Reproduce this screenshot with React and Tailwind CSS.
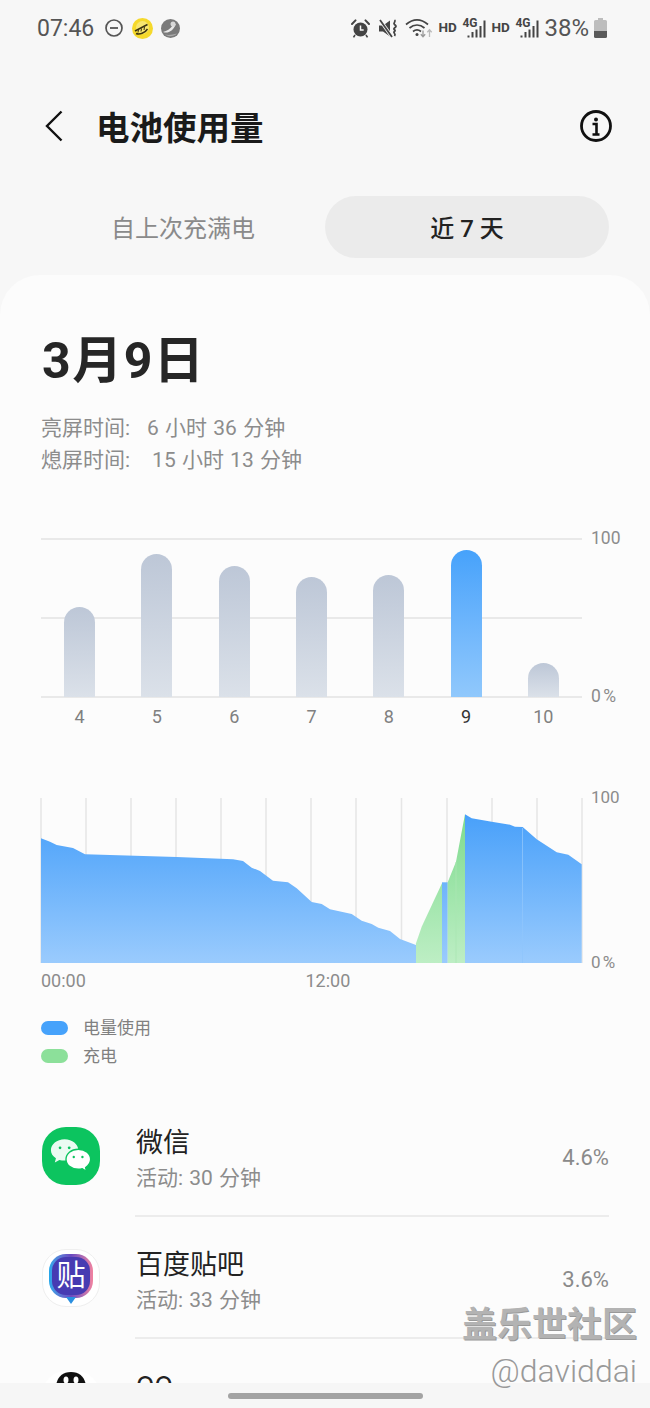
const FONT = "font-['Roboto','Noto_Sans_CJK_SC',sans-serif]";

function Alarm() {
  return (
    <svg width="19" height="19" viewBox="0 0 19 19">
      <circle cx="9.500" cy="10.500" r="7" fill="#444" />
      <path d="M9.500 6.500v4.500h3.200" fill="none" stroke="#f7f7f7" strokeWidth="1.500" />
      <path d="M1 5 4.500 1.400M18 5 14.500 1.400" stroke="#444" strokeWidth="2" strokeLinecap="round" />
      <path d="M4 16 2.500 18.400M15 16l1.500 2.400" stroke="#444" strokeWidth="1.600" />
    </svg>
  );
}

function MuteVibrate() {
  return (
    <svg width="19" height="19" viewBox="0 0 19 19">
      <path d="M0 6.500h4L11 1.500v16L4 12.500H0z" fill="#444" />
      <path d="M1 1 13 18" stroke="#f7f7f7" strokeWidth="3.400" />
      <path d="M1 1 13 18" stroke="#444" strokeWidth="1.800" />
      <path d="M15.500 1c2 1.500-2 3 0 4.500s2 2 0 3.500 2 2 0 3.500 2 2 0 4.500" fill="none" stroke="#444" strokeWidth="1.800" />
    </svg>
  );
}

function Wifi() {
  return (
    <svg width="28" height="20" viewBox="0 0 28 20">
      <path d="M1 6.500C8 .5 16 .5 23 6.500M4.500 10C9 6 15 6 19.500 10M8 13.500c2.500-2 5.500-2 8 0" fill="none" stroke="#444" strokeWidth="1.700" />
      <circle cx="12" cy="16.500" r="1.500" fill="#444" />
      <path d="M18 12.500v6M15.800 16.200l2.200 2.500 2.200-2.500" fill="none" stroke="#999" strokeWidth="1.300" />
      <path d="M24.500 19v-7M22.300 14.200l2.200-2.500 2.200 2.500" fill="none" stroke="#bbb" strokeWidth="1.300" />
    </svg>
  );
}

function Signal() {
  return (
    <div className="relative w-[24px] h-[20px]">
      <span className="absolute left-0 -top-[2px] text-[12px] font-bold leading-[14px] text-[#444] font-['Roboto',sans-serif]">4G</span>
      <svg className="absolute left-0 top-0" width="24" height="20" viewBox="0 0 24 20">
        <path d="M6.500 17.500v2M10.500 14v5.500M14.500 11.500v8M18.500 8v11.500M22.500 2.500v17" stroke="#444" strokeWidth="2" />
      </svg>
    </div>
  );
}

function StatusBar() {
  return (
    <div className="h-[56px] flex items-center pl-[37px] pr-[43px] text-[#555]">
      <span className="text-[23px] leading-none font-['Roboto',sans-serif] text-[#555]">07:46</span>
      <svg className="ml-[11px]" width="18" height="18" viewBox="0 0 18 18">
        <circle cx="9" cy="9" r="8" fill="none" stroke="#555" strokeWidth="1.700" />
        <path d="M5 9h8" stroke="#555" strokeWidth="1.800" />
      </svg>
      <svg className="ml-[9px]" width="21" height="21" viewBox="0 0 21 21">
        <circle cx="10.500" cy="10.500" r="10.500" fill="#f5d92c" />
        <circle cx="10.500" cy="9.500" r="6.500" fill="#f8e770" />
        <path d="M3 13 15.500 6.500M4 15.500c3.500 1.500 9-.5 11.500-4.500" fill="none" stroke="#3c3410" strokeWidth="1.500" />
        <path d="M6 14.500l.5-3M9 13.500l.5-3M12 12l.5-3" stroke="#3c3410" strokeWidth="1" />
      </svg>
      <svg className="ml-[8px]" width="19" height="19" viewBox="0 0 19 19">
        <circle cx="9.500" cy="9.500" r="9.500" fill="#7a7a7a" />
        <path d="M2 13c5 2 10-1 13-8l-3 1C9 10 6 12 2 13z" fill="#e8e8e8" />
        <circle cx="12" cy="5" r="2.500" fill="#d8d8d8" />
        <path d="M4 15.500c4 3 9 2 12-1-4 1-8 2-12 1z" fill="#aaa" />
      </svg>
      <div className="flex-1" />
      <div className="flex items-center">
        <Alarm />
        <span className="ml-[9px]"><MuteVibrate /></span>
        <span className="ml-[7px]"><Wifi /></span>
        <span className="ml-[5px] w-[18px] text-[13.500px] font-bold leading-none text-[#444] font-['Roboto',sans-serif]">HD</span>
        <span className="ml-[6px]"><Signal /></span>
        <span className="ml-[5px] w-[18px] text-[13.500px] font-bold leading-none text-[#444] font-['Roboto',sans-serif]">HD</span>
        <span className="ml-[6px]"><Signal /></span>
        <span className="ml-[5px] text-[24px] leading-none text-[#555] font-['Roboto',sans-serif]">38%</span>
        <svg className="ml-[5px]" width="13" height="20" viewBox="0 0 13 20">
          <path d="M4 0h5v2h2.500A1.500 1.500 0 0 1 13 3.500V13H0V3.500A1.500 1.500 0 0 1 1.500 2H4z" fill="#bdbdbd" />
          <path d="M0 13h13v5.500a1.500 1.500 0 0 1-1.500 1.500h-10A1.500 1.500 0 0 1 0 18.500z" fill="#5a5a5a" />
        </svg>
      </div>
    </div>
  );
}

function Header() {
  return (
    <div className="h-[70px] mt-[35px] flex items-center pl-[45px] pr-[38px]">
      <svg width="18" height="32" viewBox="0 0 18 32">
        <path d="M16.500 1.500 2 16l14.500 14.500" fill="none" stroke="#111" strokeWidth="2.400" />
      </svg>
      <h1 className="ml-[33px] mt-[6px] flex-1 text-[33.500px] leading-none font-bold text-[#1a1a1a]">电池使用量</h1>
      <svg width="32" height="32" viewBox="0 0 32 32">
        <circle cx="16" cy="16" r="14.500" fill="none" stroke="#111" strokeWidth="2.800" />
        <circle cx="16" cy="9.500" r="2" fill="#111" />
        <path d="M12.500 14h4v10M12.500 24.500h7" fill="none" stroke="#111" strokeWidth="2.600" />
      </svg>
    </div>
  );
}

function Tabs() {
  return (
    <div className="mt-[35px] mx-[41px] grid grid-cols-2 h-[62px]">
      <div className="flex items-center justify-center pt-[4px] text-[24px] text-[#8a8a8a]">自上次充满电</div>
      <div className="flex items-center justify-center pt-[4px] rounded-full bg-[#ebebeb] text-[24px] font-medium text-[#222]">近 7 天</div>
    </div>
  );
}

const BARS = [
  { day: "4", h: 90 },
  { day: "5", h: 143 },
  { day: "6", h: 131 },
  { day: "7", h: 120 },
  { day: "8", h: 122 },
  { day: "9", h: 147, active: true },
  { day: "10", h: 34 },
];

function BarChart() {
  return (
    <div className="mt-[62px] ml-[41px]">
      <div className="flex h-[160px]">
        <div className="relative w-[541px] h-[160px]">
          <div className="h-full flex flex-col justify-between">
            <div className="h-[2px] bg-[#e9e9e9]" />
            <div className="h-[2px] bg-[#e9e9e9]" />
            <div className="h-[2px] bg-[#e9e9e9]" />
          </div>
          <div className="absolute inset-0 bottom-[1px] grid grid-cols-7 items-end justify-items-center">
            {BARS.map((b) =>
              b.active ? (
                <div key={b.day} className="w-[31px] rounded-t-full bg-gradient-to-b from-[#46a2fb] to-[#90c8fc]" style={{ height: b.h }} />
              ) : (
                <div key={b.day} className="w-[31px] rounded-t-full bg-gradient-to-b from-[#bdc7d7] to-[#dbe1e9]" style={{ height: b.h }} />
              )
            )}
          </div>
        </div>
        <div className="ml-[9px] flex flex-col justify-between text-[17.500px] leading-none text-[#8c8c8c] font-['Roboto',sans-serif] -mt-[8px] h-[176px]">
          <span>100</span>
          <span className="mb-[1px] [word-spacing:-2px]">0 %</span>
        </div>
      </div>
      <div className="w-[541px] mt-[9px] grid grid-cols-7 justify-items-center text-[18px] leading-[20px] text-[#808080] font-['Roboto',sans-serif]">
        {BARS.map((b) => (
          <span key={b.day} className={b.active ? "text-[#333]" : ""}>{b.day}</span>
        ))}
      </div>
    </div>
  );
}

function AreaChart() {
  const grid = [1, 46, 91, 136, 181, 226, 271, 316, 361.500, 407, 452, 497, 542];
  const toX = (x) => x - 40;
  const toY = (y) => y - 798;
  const pts = (arr) => arr.map(([x, y]) => `${toX(x)},${toY(y)}`).join(" ");
  const base = 165;
  const b1 = [[41, 838.300], [50, 841.700], [56.700, 845], [73, 848], [85, 854.300], [176.700, 857], [233, 859.300], [243, 861], [251.700, 867.700], [260, 871], [273, 880.700], [288, 882.300], [296.700, 888.300], [311.700, 902], [321.700, 904], [330, 909.300], [351.700, 914], [361.700, 920.700], [371.700, 924], [378.300, 927.700], [390, 931], [400, 939], [416, 945]];
  const g1 = [[416, 943.300], [421.700, 926.700], [442, 883.300]];
  const b2 = [[442, 882.300], [447.700, 882.300]];
  const g2 = [[447.700, 882.300], [456, 861.700], [465, 814.300]];
  const b3 = [[465, 814.300], [471.700, 818.300], [491.700, 821.700], [510, 824.700], [515, 826.700], [522.700, 827], [536.700, 839.300], [556.700, 852.300], [568.300, 854.700], [581.700, 864.300]];
  const poly = (a) => `${toX(a[0][0])},${base} ${pts(a)} ${toX(a[a.length - 1][0])},${base}`;
  return (
    <div className="mt-[71px] ml-[40px]">
      <div className="flex h-[165px]">
        <svg width="543" height="165" viewBox="0 0 543 165" className="shrink-0">
          <defs>
            <linearGradient id="blue" x1="0" y1="16" x2="0" y2="165" gradientUnits="userSpaceOnUse">
              <stop offset="0" stopColor="#48a0fa" />
              <stop offset="1" stopColor="#9acbfd" />
            </linearGradient>
            <linearGradient id="green" x1="0" y1="16" x2="0" y2="165" gradientUnits="userSpaceOnUse">
              <stop offset="0" stopColor="#7edb8e" />
              <stop offset="1" stopColor="#bdeec4" />
            </linearGradient>
          </defs>
          {grid.map((x) => (
            <line key={x} x1={x} x2={x} y1="0" y2="165" stroke="#e6e6e6" strokeWidth="1.500" />
          ))}
          <polygon points={poly(b1)} fill="url(#blue)" />
          <polygon points={poly(g1)} fill="url(#green)" />
          <polygon points={poly(b2)} fill="url(#blue)" />
          <polygon points={poly(g2)} fill="url(#green)" />
          <polygon points={poly(b3)} fill="url(#blue)" />
          <line x1="416" x2="416" y1="64" y2="165" stroke="#a9e6b3" strokeWidth="0.800" />
          <line x1="482.500" x2="482.500" y1="30" y2="165" stroke="#8fc5fb" strokeWidth="0.800" />
        </svg>
        <div className="ml-[8px] flex flex-col justify-between h-[182px] -mt-[9px] text-[17px] leading-none text-[#8c8c8c] font-['Roboto',sans-serif]">
          <span>100</span>
          <span className="[word-spacing:-2px]">0 %</span>
        </div>
      </div>
      <div className="w-[542px] h-[36px] pl-[1px] grid grid-cols-2 text-[18px] leading-[36px] text-[#8c8c8c] font-['Roboto',sans-serif]">
        <span>00:00</span>
        <span className="-ml-[6px]">12:00</span>
      </div>
    </div>
  );
}

function Legend() {
  return (
    <div className="mt-[15px] ml-[41px] text-[17px] leading-[28px] text-[#808080]">
      <div className="flex items-center">
        <span className="w-[27px] h-[14px] rounded-full bg-[#46a2fb]" />
        <span className="ml-[15px]">电量使用</span>
      </div>
      <div className="flex items-center">
        <span className="w-[27px] h-[14px] rounded-full bg-[#8ce09a]" />
        <span className="ml-[15px]">充电</span>
      </div>
    </div>
  );
}

function WeChatIcon() {
  return (
    <div className="w-[58px] h-[58px] rounded-[24px] bg-[#0cc45f] flex items-center justify-center">
      <svg width="42" height="37" viewBox="0 0 46 40">
        <path d="M16 1C7.500 1 1 6.500 1 13c0 3.800 2 6.800 5.500 9l-1.200 4.500 5-2.800c1.800.5 3.600.8 5.700.8 8.500 0 15-5.300 15-11.500S24.500 1 16 1z" fill="#fff" fillOpacity="0.92" />
        <circle cx="11" cy="10.500" r="1.500" fill="#0cc45f" />
        <circle cx="21" cy="10.500" r="1.500" fill="#0cc45f" />
        <path d="M31 12c-8 0-13.500 5-13.500 11S23 34 31 34c1.600 0 3-.2 4.300-.6l4.700 2.800-1-4.200c3.500-2.200 5.500-5.200 5.500-9C44.500 17 39 12 31 12z" fill="#fff" stroke="#0cc45f" strokeWidth="1.500" />
        <circle cx="26" cy="20.500" r="1.300" fill="#0cc45f" />
        <circle cx="35.500" cy="20.500" r="1.300" fill="#0cc45f" />
      </svg>
    </div>
  );
}

function TiebaIcon() {
  return (
    <div className="w-[58px] h-[58px] rounded-[24px] bg-white border border-[#efefef] flex items-center justify-center">
      <div className="relative w-[44px] h-[44px] rounded-[17px] -mt-[4px] p-[3px] bg-gradient-to-r from-[#22a8ea] via-[#6a48c0] to-[#f2829f]">
        <div className="w-full h-full rounded-[14px] bg-[#473bb2] flex items-center justify-center">
          <span className="text-[29px] leading-none font-normal text-white">贴</span>
        </div>
        <span className="absolute -bottom-[6px] left-[17px] w-0 h-0 border-x-[5px] border-x-transparent border-t-[7px] border-t-[#2a8fe0]" />
      </div>
    </div>
  );
}

function QQIcon() {
  return (
    <div className="w-[58px] h-[58px] rounded-[24px] bg-white flex justify-center pt-[1px]">
      <svg width="32" height="40" viewBox="0 0 32 40">
        <path d="M16 0C6 0 1 7 1 16v24h30V16C31 7 26 0 16 0z" fill="#111" />
        <ellipse cx="11" cy="8" rx="2.500" ry="3.500" fill="#fff" />
        <ellipse cx="21" cy="8" rx="2.500" ry="3.500" fill="#fff" />
      </svg>
    </div>
  );
}

function AppRow({ icon, name, sub, pct, divider }) {
  return (
    <div className="h-[122px] flex">
      <div className="w-[94px] pl-[1px] pt-[32px] shrink-0">{icon}</div>
      <div className={`flex-1 flex ${divider ? "border-b-2 border-[#ececec]" : ""}`}>
        <div className="flex-1 pt-[31px] pl-[1px]">
          <div className="text-[27px] leading-[34px] text-[#222]">{name}</div>
          <div className="mt-[4px] text-[21px] leading-[28px] text-[#8c8c8c] [word-spacing:1px]">{sub}</div>
        </div>
        <div className="pt-[49px] text-[22px] leading-[28px] text-[#8a8a8a] font-['Roboto',sans-serif]">{pct}</div>
      </div>
    </div>
  );
}

export default function App() {
  return (
    <div className={`relative w-[650px] h-[1408px] overflow-hidden flex flex-col bg-[#f7f7f7] ${FONT}`}>
      <div className="flex-1 min-h-0 overflow-hidden">
        <StatusBar />
        <Header />
        <Tabs />
        <div className="mt-[17px] rounded-t-[40px] bg-[#fcfcfc] h-[1200px]">
          <div className="pt-[56px] pl-[42px] text-[50px] leading-[60px] font-bold text-[#262626] tracking-[1.500px]">3月9日</div>
          <div className="mt-[21px] pl-[41px] text-[21px] leading-[32px] text-[#8c8c8c]">
            <div className="flex">
              <span>亮屏时间:</span>
              <span className="ml-[17px] [word-spacing:1px]">6 小时 36 分钟</span>
            </div>
            <div className="flex">
              <span>熄屏时间:</span>
              <span className="ml-[22px] [word-spacing:1px]">15 小时 13 分钟</span>
            </div>
          </div>
          <BarChart />
          <AreaChart />
          <Legend />
          <div className="mt-[25px] mx-[41px]">
            <AppRow icon={<WeChatIcon />} name="微信" sub="活动: 30 分钟" pct="4.6%" divider />
            <AppRow icon={<TiebaIcon />} name="百度贴吧" sub="活动: 33 分钟" pct="3.6%" divider />
            <AppRow icon={<QQIcon />} name="QQ" sub="活动: 20 分钟" pct="2.9%" />
          </div>
        </div>
      </div>
      <div className="h-[25px] shrink-0 bg-[#f6f6f6] flex justify-center items-center pt-[1px]">
        <div className="w-[195px] h-[6px] rounded-full bg-[#a3a3a3]" />
      </div>
      <div className="absolute right-[13px] top-[1305px] text-right text-[#b3b3b3]">
        <div className="text-[35px] leading-[42px] font-bold [text-shadow:1px_1px_0_#999]">盖乐世社区</div>
        <div className="mt-[6px] text-[32px] leading-[36px] text-[#999] font-light">@daviddai</div>
      </div>
    </div>
  );
}
